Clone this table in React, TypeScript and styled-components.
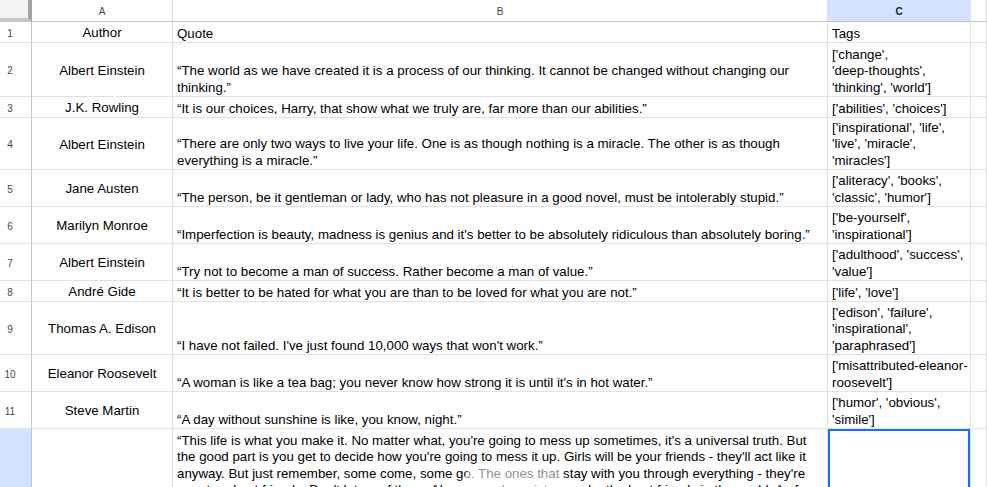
import React from "react";
import styled, { createGlobalStyle } from "styled-components";

const GlobalStyle = createGlobalStyle`
  html, body {
    margin: 0;
    padding: 0;
    background: #ffffff;
    overflow: hidden;
  }
  body {
    font-family: "Liberation Sans", Arial, sans-serif;
  }
`;

type VAlign = "top" | "middle" | "bottom";

const valignMap: Record<VAlign, string> = {
  top: "flex-start",
  middle: "center",
  bottom: "flex-end",
};

const valignPad: Record<VAlign, string> = {
  top: "4px 4px 0 4px",
  middle: "3px 4px 0 4px",
  bottom: "0 3px 0 4px",
};

const Sheet = styled.div`
  display: grid;
  grid-template-columns: 32px 141px 655px 143px 1fr;
  grid-template-rows: 22px 21px 54px 21px 52px 37px 37px 37px 21px 53px 37px 37px 140px;
  width: 987px;
  height: 487px;
  overflow: hidden;
`;

const Corner = styled.div`
  box-sizing: border-box;
  background: #f3f3f3;
  border-right: 4px solid #a3a3a3;
  border-bottom: 4px solid #c6c6c6;
`;

const ColHeader = styled.div<{ $active?: boolean }>`
  box-sizing: border-box;
  display: flex;
  align-items: center;
  justify-content: center;
  padding-top: 2px;
  font-size: 10px;
  color: ${({ $active }) => ($active ? "#0b1d3a" : "#444746")};
  font-weight: ${({ $active }) => ($active ? 600 : 400)};
  background: ${({ $active }) => ($active ? "#d3e3fd" : "#ffffff")};
  border-right: 1px solid #dadce0;
  border-bottom: 1px solid #c4c7c5;
`;

const RowHeader = styled.div<{ $active?: boolean }>`
  box-sizing: border-box;
  display: flex;
  align-items: center;
  padding: 2px 0 0 3px;
  font-size: 10px;
  color: #444746;
  background: ${({ $active }) => ($active ? "#d3e3fd" : "#ffffff")};
  border-right: 1px solid #c4c7c5;
  border-bottom: 1px solid #e1e1e1;

  span {
    width: 14px;
    text-align: center;
  }
`;

const Cell = styled.div<{ $valign?: VAlign; $center?: boolean; $selected?: boolean }>`
  box-sizing: border-box;
  display: flex;
  flex-direction: column;
  justify-content: ${({ $valign }) => valignMap[$valign ?? "bottom"]};
  padding: ${({ $valign }) => valignPad[$valign ?? "bottom"]};
  font-size: 13.3px;
  line-height: 16.4px;
  color: #000000;
  text-align: ${({ $center }) => ($center ? "center" : "left")};
  border-right: 1px solid #e1e1e1;
  border-bottom: 1px solid #e1e1e1;
  overflow: hidden;
  overflow-wrap: break-word;
  box-shadow: ${({ $selected }) => ($selected ? "inset 0 0 0 2px #1a73e8" : "none")};
`;

const Tag = styled.span`
  white-space: nowrap;
`;

const Scrim = styled.div`
  position: fixed;
  left: 464px;
  bottom: -10px;
  width: 100px;
  height: 32px;
  border-radius: 16px;
  background: rgba(255, 255, 255, 0.55);
  pointer-events: none;
`;

interface Row {
  author: string;
  quote: string;
  tags: string[];
}

const rows: Row[] = [
  { author: "Author", quote: "Quote", tags: ["Tags"] },
  {
    author: "Albert Einstein",
    quote:
      "“The world as we have created it is a process of our thinking. It cannot be changed without changing our thinking.”",
    tags: ["['change',", "'deep-thoughts',", "'thinking',", "'world']"],
  },
  {
    author: "J.K. Rowling",
    quote: "“It is our choices, Harry, that show what we truly are, far more than our abilities.”",
    tags: ["['abilities',", "'choices']"],
  },
  {
    author: "Albert Einstein",
    quote:
      "“There are only two ways to live your life. One is as though nothing is a miracle. The other is as though everything is a miracle.”",
    tags: ["['inspirational',", "'life',", "'live',", "'miracle',", "'miracles']"],
  },
  {
    author: "Jane Austen",
    quote:
      "“The person, be it gentleman or lady, who has not pleasure in a good novel, must be intolerably stupid.”",
    tags: ["['aliteracy',", "'books',", "'classic',", "'humor']"],
  },
  {
    author: "Marilyn Monroe",
    quote:
      "“Imperfection is beauty, madness is genius and it's better to be absolutely ridiculous than absolutely boring.”",
    tags: ["['be-yourself',", "'inspirational']"],
  },
  {
    author: "Albert Einstein",
    quote: "“Try not to become a man of success. Rather become a man of value.”",
    tags: ["['adulthood',", "'success',", "'value']"],
  },
  {
    author: "André Gide",
    quote: "“It is better to be hated for what you are than to be loved for what you are not.”",
    tags: ["['life',", "'love']"],
  },
  {
    author: "Thomas A. Edison",
    quote: "“I have not failed. I've just found 10,000 ways that won't work.”",
    tags: ["['edison',", "'failure',", "'inspirational',", "'paraphrased']"],
  },
  {
    author: "Eleanor Roosevelt",
    quote: "“A woman is like a tea bag; you never know how strong it is until it's in hot water.”",
    tags: ["['misattributed-eleanor-|roosevelt']"],
  },
  {
    author: "Steve Martin",
    quote: "“A day without sunshine is like, you know, night.”",
    tags: ["['humor',", "'obvious',", "'simile']"],
  },
];

const lastQuote =
  "“This life is what you make it. No matter what, you're going to mess up sometimes, it's a universal truth. But the good part is you get to decide how you're going to mess it up. Girls will be your friends - they'll act like it anyway. But just remember, some come, some go. The ones that stay with you through everything - they're your true best friends. Don't let go of them. Also remember, sisters make the best friends in the world. As for lovers, well, they'll come and go too.”";

// "|" marks the one spot where a long tag may wrap (Sheets breaks it there)
const TagList: React.FC<{ tags: string[] }> = ({ tags }) => (
  <div>
    {tags.map((t, i) => (
      <React.Fragment key={i}>
        {i > 0 && " "}
        {t.split("|").map((part, j) => (
          <React.Fragment key={j}>
            {j > 0 && <wbr />}
            <Tag>{part}</Tag>
          </React.Fragment>
        ))}
      </React.Fragment>
    ))}
  </div>
);

const App: React.FC = () => {
  return (
    <>
      <GlobalStyle />
      <Sheet>
        <Corner />
        <ColHeader>A</ColHeader>
        <ColHeader>B</ColHeader>
        <ColHeader $active>C</ColHeader>
        <ColHeader />

        {rows.map((row, i) => (
          <React.Fragment key={i}>
            <RowHeader>
              <span>{i + 1}</span>
            </RowHeader>
            <Cell $valign="middle" $center>
              {row.author}
            </Cell>
            <Cell>{row.quote}</Cell>
            <Cell>
              <TagList tags={row.tags} />
            </Cell>
            <Cell />
          </React.Fragment>
        ))}

        <RowHeader $active />
        <Cell />
        <Cell $valign="top">{lastQuote}</Cell>
        <Cell $selected />
        <Cell />
      </Sheet>
      <Scrim />
    </>
  );
};

export default App;
